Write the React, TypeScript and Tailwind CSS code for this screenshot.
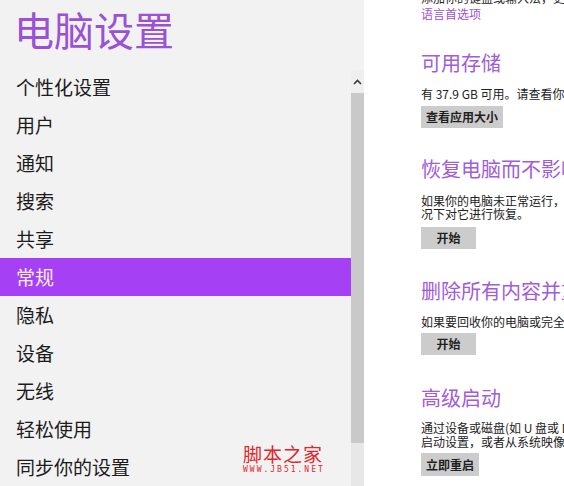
const NAV_ITEMS = [
  '个性化设置',
  '用户',
  '通知',
  '搜索',
  '共享',
  '常规',
  '隐私',
  '设备',
  '无线',
  '轻松使用',
  '同步你的设置',
];

const ACTIVE = '常规';

const cjk = "font-['Noto_Sans_CJK_SC','Noto_Sans',sans-serif]";

function ActionButton({ label, className = '' }: { label: string; className?: string }) {
  return (
    <div
      className={`inline-flex h-[22px] min-w-[55px] items-center justify-center bg-[#cccccc] px-[5px] text-[12px] font-bold leading-none text-[#1f1f1f] ${className}`}
    >
      {label}
    </div>
  );
}

function SectionTitle({ children, className = '' }: { children: React.ReactNode; className?: string }) {
  return (
    <h2 className={`whitespace-nowrap text-[20px] leading-[28px] text-[#a15cd9] ${className}`}>{children}</h2>
  );
}

export default function App() {
  return (
    <div className={`relative flex h-[486px] w-[564px] overflow-hidden bg-white ${cjk}`}>
      {/* left navigation */}
      <div className="flex w-[351px] shrink-0 flex-col bg-[#f2f2f2]">
        <div className="h-[68px] pl-[14px]">
          <h1 className="text-[40px] leading-[58px] text-[#9b50d8]">电脑设置</h1>
        </div>
        {NAV_ITEMS.map((item) => (
          <div
            key={item}
            className={`flex h-[38px] items-center pl-[16px] text-[19px] ${
              item === ACTIVE ? 'w-[352px] bg-[#a640f5] text-[#f7eeff]' : 'text-[#1b1b1b]'
            }`}
          >
            {item}
          </div>
        ))}
      </div>

      {/* scrollbar */}
      <div className="flex w-[13px] shrink-0 flex-col bg-[#f2f2f2]">
        <div className="h-[70px]" />
        <div className="flex h-[23px] items-center justify-center bg-[#efefef]">
          <svg width="9" height="6" viewBox="0 0 9 6" fill="none">
            <path d="M1 5 L4.5 1.5 L8 5" stroke="#3a3a3a" strokeWidth="1.6" />
          </svg>
        </div>
        <div className="h-[350px] bg-[#c9c9c9]" />
        <div className="flex-1 bg-[#e7e7e7]" />
      </div>

      {/* right content */}
      <div className="flex-1 overflow-hidden bg-white pl-[57px]">
        <div className="-mt-[10px] h-[16px] whitespace-nowrap text-[12px] leading-[16px] text-[#2a2a2a]">
          添加你的键盘或输入法，更改显示语言，或者更改语言设置
        </div>
        <div className="text-[12px] leading-[16px] text-[#9b55d2]">语言首选项</div>

        <SectionTitle className="mt-[27px]">可用存储</SectionTitle>
        <p className="mt-[9px] whitespace-nowrap text-[12px] leading-[16px] text-[#222]">
          有 37.9 GB 可用。请查看你的应用所用的空间大小。
        </p>
        <ActionButton label="查看应用大小" className="mt-[4px] h-[21px]" />

        <SectionTitle className="mt-[27px]">恢复电脑而不影响你的文件</SectionTitle>
        <div className="mt-[11px] whitespace-nowrap text-[12px] leading-[13px] text-[#222]">
          <div>如果你的电脑未正常运行，你可以在不丢失照片、音乐、视频和其他个人文件的情</div>
          <div>况下对它进行恢复。</div>
        </div>
        <ActionButton label="开始" className="mt-[7px]" />

        <SectionTitle className="mt-[28px]">删除所有内容并重新安装 Windows</SectionTitle>
        <p className="mt-[10px] whitespace-nowrap text-[12px] leading-[13px] text-[#222]">
          如果要回收你的电脑或完全重新开始，可以将电脑恢复为出厂设置。
        </p>
        <ActionButton label="开始" className="mt-[5px]" />

        <SectionTitle className="mt-[29px]">高级启动</SectionTitle>
        <div className="mt-[9px] whitespace-nowrap text-[12px] leading-[14px] text-[#222]">
          <div>通过设备或磁盘(如 U 盘或 DVD)启动，更改电脑固件设置，更改 Windows</div>
          <div>启动设置，或者从系统映像还原 Windows。这将重新启动电脑。</div>
        </div>
        <ActionButton label="立即重启" className="mt-[4px] h-[23px]" />
      </div>

      {/* site watermark */}
      <div className="pointer-events-none absolute left-[243px] top-[443px] flex flex-col items-start">
        <span className="text-[19px] leading-[22px] tracking-[1px] text-[#e0262c]">脚本之家</span>
        <span className="font-['DejaVu_Sans_Mono',monospace] text-[8px] leading-[9px] tracking-[2px] text-[#e0262c]">
          WWW.JB51.NET
        </span>
      </div>
    </div>
  );
}
